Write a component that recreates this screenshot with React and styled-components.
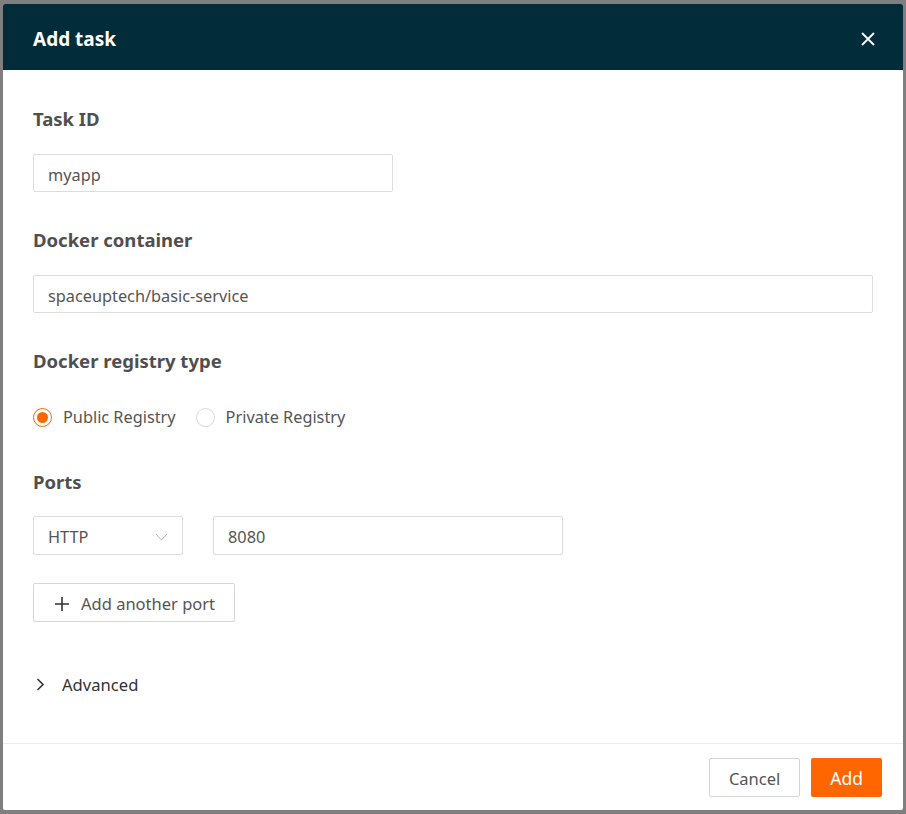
import React from "react";
import styled, { createGlobalStyle } from "styled-components";

const Global = createGlobalStyle`
  html, body { margin: 0; padding: 0; }
  body {
    background: #7f7f7f;
    font-family: "Noto Sans", "Open Sans", sans-serif;
  }
`;

const Backdrop = styled.div`
  width: 906px;
  height: 814px;
  padding: 4px 3px 4px 3px;
  box-sizing: border-box;
  background: #7f7f7f;
`;

const Modal = styled.div`
  width: 900px;
  height: 806px;
  background: #fff;
  display: flex;
  flex-direction: column;
  border-radius: 2px;
  overflow: hidden;
`;

const Header = styled.div`
  height: 66px;
  flex-shrink: 0;
  background: #022c3a;
  display: flex;
  align-items: center;
  justify-content: space-between;
  padding: 3px 27px 0 30px;
  box-sizing: border-box;
`;

const Title = styled.h2`
  margin: 0;
  color: #fff;
  font-size: 19px;
  font-weight: 700;
`;

const CloseBtn = styled.button`
  border: 0;
  background: none;
  padding: 0;
  width: 16px;
  height: 16px;
  display: flex;
  cursor: pointer;
`;

const Body = styled.div`
  flex: 1;
  padding: 36px 30px 0 30px;
`;

const Label = styled.div`
  font-size: 18.5px;
  font-weight: 700;
  color: #4f4f4f;
  line-height: 26px;
  margin-bottom: ${(p) => p.$mb || 22}px;
`;

const Field = styled.div`
  box-sizing: border-box;
  width: ${(p) => p.$w || "100%"};
  height: ${(p) => p.$h || 38}px;
  border: 1px solid #dcdcdc;
  border-radius: 2px;
  display: flex;
  align-items: center;
  justify-content: space-between;
  padding: 3px 14px 0 14px;
  font-size: 16.3px;
  color: #555;
  margin-bottom: ${(p) => p.$mb || 0}px;
`;

const RadioRow = styled.div`
  display: flex;
  gap: 20px;
  height: 22px;
  align-items: center;
  margin-bottom: 41px;
`;

const RadioOpt = styled.label`
  display: flex;
  align-items: center;
  gap: 11px;
  font-size: 16.3px;
  color: #555;
`;

const Dot = styled.span`
  box-sizing: border-box;
  width: 19px;
  height: 19px;
  border-radius: 50%;
  border: 1px solid ${(p) => (p.$on ? "#ff6600" : "#d9d9d9")};
  display: flex;
  align-items: center;
  justify-content: center;
  &::after {
    content: "";
    width: 11px;
    height: 11px;
    border-radius: 50%;
    background: ${(p) => (p.$on ? "#ff6600" : "transparent")};
  }
`;

const PortRow = styled.div`
  display: flex;
  gap: 30px;
  margin-bottom: 28px;
`;

const GhostButton = styled.button`
  box-sizing: border-box;
  height: 39px;
  border: 1px solid #d6d6d6;
  border-radius: 2px;
  background: #fff;
  font-family: inherit;
  font-size: 16.5px;
  color: #555;
  display: flex;
  align-items: center;
  gap: 12px;
  padding: ${(p) => p.$pad || "0 19px"};
  padding-top: 2px;
`;

const Advanced = styled.div`
  display: flex;
  align-items: center;
  gap: 17px;
  margin-top: 52px;
  padding-left: 3px;
  font-size: 16.6px;
  color: #333;
  height: 20px;
`;

const Footer = styled.div`
  border-top: 1px solid #ebebeb;
  height: 66px;
  flex-shrink: 0;
  display: flex;
  justify-content: flex-end;
  align-items: center;
  gap: 11px;
  padding: 0 21px;
`;

const PrimaryButton = styled.button`
  height: 39px;
  border: 0;
  border-radius: 2px;
  background: #ff6600;
  color: #fff;
  font-family: inherit;
  font-size: 17.5px;
  padding: 2px 19px 0 19px;
`;

export default function App() {
  return (
    <Backdrop>
      <Global />
      <Modal>
        <Header>
          <Title>Add task</Title>
          <CloseBtn aria-label="Close">
            <svg width="16" height="16" viewBox="0 0 16 16">
              <path d="M2 2 L14 14 M14 2 L2 14" stroke="#fff" strokeWidth="1.8" />
            </svg>
          </CloseBtn>
        </Header>
        <Body>
          <Label>Task ID</Label>
          <Field $w="360px" $mb={35}>myapp</Field>

          <Label>Docker container</Label>
          <Field $mb={35}>spaceuptech/basic-service</Field>

          <Label $mb={32}>Docker registry type</Label>
          <RadioRow>
            <RadioOpt><Dot $on />Public Registry</RadioOpt>
            <RadioOpt><Dot />Private Registry</RadioOpt>
          </RadioRow>

          <Label $mb={21}>Ports</Label>
          <PortRow>
            <Field $w="150px" $h={39}>
              HTTP
              <svg width="13" height="8" viewBox="0 0 13 8">
                <path d="M1 1 L6.5 7 L12 1" fill="none" stroke="#b5b5b5" strokeWidth="1" />
              </svg>
            </Field>
            <Field $w="350px" $h={39}>8080</Field>
          </PortRow>

          <GhostButton $pad="0 19px 0 21px">
            <svg width="14" height="14" viewBox="0 0 14 14">
              <path d="M7 0 V14 M0 7 H14" stroke="#333" strokeWidth="1.6" />
            </svg>
            Add another port
          </GhostButton>

          <Advanced>
            <svg width="9" height="13" viewBox="0 0 9 13">
              <path d="M1.5 1 L7 6.5 L1.5 12" fill="none" stroke="#333" strokeWidth="1.6" />
            </svg>
            Advanced
          </Advanced>
        </Body>
        <Footer>
          <GhostButton $pad="0 19px">Cancel</GhostButton>
          <PrimaryButton>Add</PrimaryButton>
        </Footer>
      </Modal>
    </Backdrop>
  );
}
